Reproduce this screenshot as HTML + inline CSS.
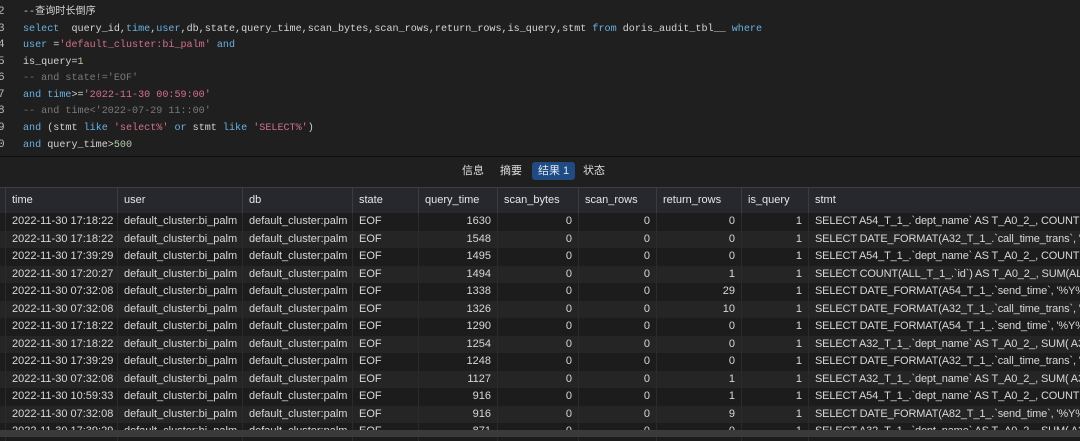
<!DOCTYPE html>
<html><head><meta charset="utf-8"><style>
body{margin:0;width:1080px;height:437px;overflow:hidden;background:#202020;font-family:"Liberation Sans","Noto Sans CJK SC",sans-serif;}
.code{position:absolute;left:0;top:0;width:1080px;height:156px;background:#1f1f1f;border-bottom:1px solid #0e0e0e;font-family:"Liberation Mono","Noto Sans CJK SC",monospace;font-size:10.1px;color:#d4d4d4}
.ln{position:absolute;left:0;height:16px;line-height:16px;white-space:pre}
.n{display:inline-block;width:25px;color:#bdbdbd;margin-left:-2px;font-size:11px}
.k{color:#6ab0e0}.s{color:#d4708a}.c{color:#7a7a7a}.g{color:#b5cea8}
.tabs{position:absolute;top:157px;left:0;width:1080px;height:29px;background:#1f1f1f;font-size:11px;color:#ddd}
.tab{position:absolute;top:5px;height:18px;line-height:18px;padding:0 6px}
.tab.on{background:#1f4a82;border-radius:3px;color:#dbe8f7}
.hdr{position:absolute;top:187px;left:0;width:1080px;height:25px;background:#27282d;border-top:1px solid #3a3d48;border-bottom:1px solid #151515;font-size:11px;color:#e6e6e6}
.row{position:absolute;left:0;width:1080px;height:17.5px;font-size:11px;color:#d8d8d8;line-height:17.5px}
.cell{position:absolute;top:0;height:100%;white-space:nowrap;overflow:hidden;box-sizing:border-box;padding:0 6px;border-left:1px solid #2b2b2b}
.hdr .cell{line-height:25px;border-left:1px solid #3a3c44}
.r{text-align:right}
.st{letter-spacing:-0.15px}
.foot{position:absolute;top:430px;left:0;width:1080px;height:7px;background:#3a3a3a}
</style></head><body>
<div class="code">
<div class="ln" style="top:4px"><span class="n">2</span>--查询时长倒序</div>
<div class="ln" style="top:21px"><span class="n">3</span><span class="k">select</span>  query_id,<span class="k">time</span>,<span class="k">user</span>,db,state,query_time,scan_bytes,scan_rows,return_rows,is_query,stmt <span class="k">from</span> doris_audit_tbl__ <span class="k">where</span></div>
<div class="ln" style="top:37px"><span class="n">4</span><span class="k">user</span> =<span class="s">'default_cluster:bi_palm'</span> <span class="k">and</span></div>
<div class="ln" style="top:54px"><span class="n">5</span>is_query=<span class="g">1</span></div>
<div class="ln" style="top:70px"><span class="n">6</span><span class="c">-- and state!='EOF'</span></div>
<div class="ln" style="top:87px"><span class="n">7</span><span class="k">and time</span>>=<span class="s">'2022-11-30 00:59:00'</span></div>
<div class="ln" style="top:103px"><span class="n">8</span><span class="c">-- and time&lt;'2022-07-29 11::00'</span></div>
<div class="ln" style="top:120px"><span class="n">9</span><span class="k">and</span> (stmt <span class="k">like</span> <span class="s">'select%'</span> <span class="k">or</span> stmt <span class="k">like</span> <span class="s">'SELECT%'</span>)</div>
<div class="ln" style="top:137px"><span class="n">0</span><span class="k">and</span> query_time><span class="g">500</span></div>
</div>
<div class="tabs">
<span class="tab" style="left:456px">信息</span>
<span class="tab" style="left:494px">摘要</span>
<span class="tab on" style="left:532px">结果 1</span>
<span class="tab" style="left:577px">状态</span>
</div>
<div class="hdr" id="h"></div>
<div id="rows"></div>
<div class="foot"></div>
<script>
var cols=[[5,117,'time'],[117,242,'user'],[242,352,'db'],[352,418,'state'],[418,497,'query_time',1],[497,578,'scan_bytes',1],[578,656,'scan_rows',1],[656,741,'return_rows',1],[741,808,'is_query',1],[808,1080,'stmt']];
var h='';cols.forEach(function(c){h+='<div class="cell" style="left:'+c[0]+'px;width:'+(c[1]-c[0])+'px">'+c[2]+'</div>'});
document.getElementById('h').innerHTML=h;
var d=[["17:18:22",1630,0,0,0,"SELECT A54_T_1_.`dept_name` AS T_A0_2_, COUNT(I"],
["17:18:22",1548,0,0,0,"SELECT DATE_FORMAT(A32_T_1_.`call_time_trans`, '%Y"],
["17:39:29",1495,0,0,0,"SELECT A54_T_1_.`dept_name` AS T_A0_2_, COUNT(I"],
["17:20:27",1494,0,0,1,"SELECT COUNT(ALL_T_1_.`id`) AS T_A0_2_, SUM(ALL"],
["07:32:08",1338,0,0,29,"SELECT DATE_FORMAT(A54_T_1_.`send_time`, '%Y%m"],
["07:32:08",1326,0,0,10,"SELECT DATE_FORMAT(A32_T_1_.`call_time_trans`, '%Y"],
["17:18:22",1290,0,0,0,"SELECT DATE_FORMAT(A54_T_1_.`send_time`, '%Y%m"],
["17:18:22",1254,0,0,0,"SELECT A32_T_1_.`dept_name` AS T_A0_2_, SUM( A3"],
["17:39:29",1248,0,0,0,"SELECT DATE_FORMAT(A32_T_1_.`call_time_trans`, '%Y"],
["07:32:08",1127,0,0,1,"SELECT A32_T_1_.`dept_name` AS T_A0_2_, SUM( A3"],
["10:59:33",916,0,0,1,"SELECT A54_T_1_.`dept_name` AS T_A0_2_, COUNT(I"],
["07:32:08",916,0,0,9,"SELECT DATE_FORMAT(A82_T_1_.`send_time`, '%Y%m"],
["17:39:29",871,0,0,0,"SELECT A32_T_1_.`dept_name` AS T_A0_2_, SUM( A3"]];
var s='';d.forEach(function(r,i){
var v=['2022-11-30 '+r[0],'default_cluster:bi_palm','default_cluster:palm','EOF',r[1],r[2],r[3],r[4],1,r[5]];
s+='<div class="row" style="top:'+(213+i*17.5)+'px;background:'+(i%2?'#252525':'#1c1c1c')+'">';
cols.forEach(function(c,j){s+='<div class="cell'+(c[3]?' r':'')+(j==9?' st':'')+'" style="left:'+c[0]+'px;width:'+(c[1]-c[0])+'px">'+v[j]+'</div>'});
s+='</div>'});
document.getElementById('rows').innerHTML=s;
</script>
</body></html>
